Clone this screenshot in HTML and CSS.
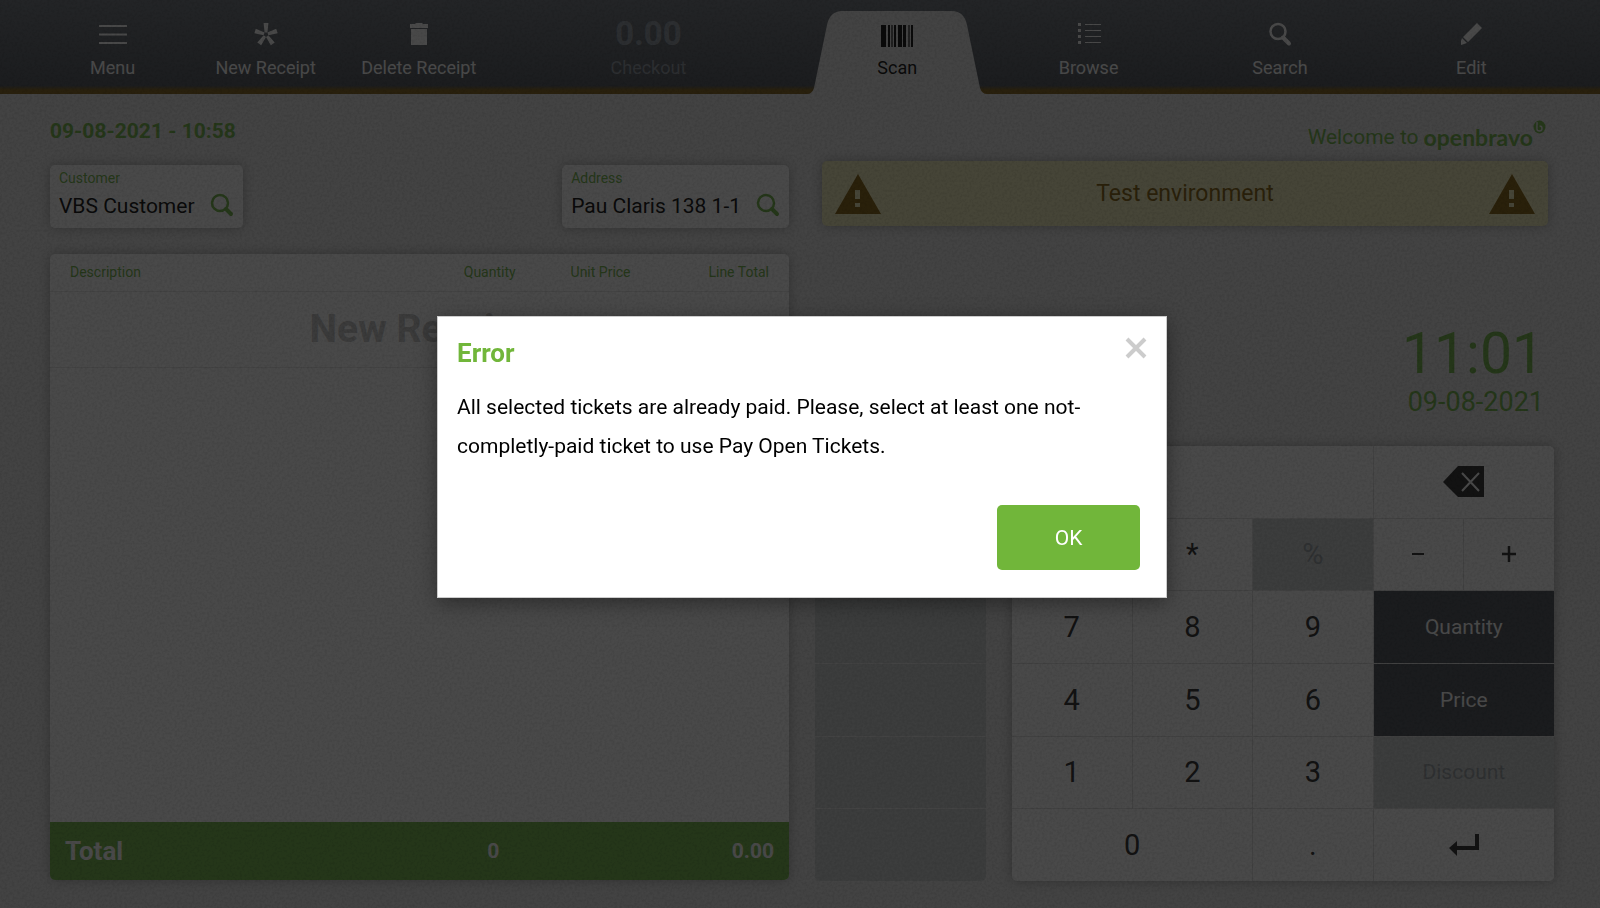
FILE: index.html
```html
<!DOCTYPE html>
<html lang="en">
<head>
	<meta charset="UTF-8">
	<meta name="viewport" content="width=device-width, initial-scale=1">
	<title>Web POS</title>
	<link rel="stylesheet" href="styles.css">
</head>
<body>
	<header class="toolbar">
		<button type="button" class="tool">
			<svg class="icon" width="30" height="24" viewBox="0 0 30 24"><path d="M1 4h28M1 12.500h28M1 21h28" fill="none" stroke="currentColor" stroke-width="2"/></svg>
			<span>Menu</span>
		</button>
		<button type="button" class="tool">
			<svg class="icon" width="24" height="24" viewBox="0 0 24 24">
				<g fill="currentColor">
					<path id="petal" d="M9.6 1h4.8l-1 9.500h-2.800z"/>
					<use href="#petal" transform="rotate(72 12 12.5)"/>
					<use href="#petal" transform="rotate(144 12 12.5)"/>
					<use href="#petal" transform="rotate(216 12 12.5)"/>
					<use href="#petal" transform="rotate(288 12 12.5)"/>
				</g>
			</svg>
			<span>New Receipt</span>
		</button>
		<button type="button" class="tool">
			<svg class="icon" width="24" height="24" viewBox="0 0 24 24"><path d="M3 2h5l1-1h6l1 1h5v4H3zM4 7h16v16H4z" fill="currentColor"/></svg>
			<span>Delete Receipt</span>
		</button>
		<button type="button" class="tool checkout" disabled>
			<strong>0.00</strong>
			<span>Checkout</span>
		</button>
		<button type="button" class="tool active">
			<svg class="tab" viewBox="0 0 180 83"><path d="M0 83q5 0 7-6L20 14Q23 0 35 0H145q12 0 15 14l13 63q2 6 7 6z" fill="currentColor"/></svg>
			<svg class="icon" width="34" height="24" viewBox="0 0 34 24">
				<path d="M1 3h5v22H1zM8 3h2v22H8zM14 3h2v22h-2zM18 3h4v22h-4zM23 3h3v22h-3zM31 3h2v22h-2z" fill="currentColor"/>
				<path d="M11 3h2v22h-2zM28 3h2v22h-2z" fill="currentColor" opacity=".6"/>
			</svg>
			<span>Scan</span>
		</button>
		<button type="button" class="tool">
			<svg class="icon" width="24" height="24" viewBox="0 0 24 24">
				<path d="M8 2.500h16M8 8.500h16M8 14.500h16M8 20.500h16" fill="none" stroke="currentColor"/>
				<path d="M1 1h3v3H1zM1 7h3v3H1zM1 13h3v3H1zM1 19h3v3H1z" fill="currentColor"/>
			</svg>
			<span>Browse</span>
		</button>
		<button type="button" class="tool">
			<svg class="icon" width="24" height="24" viewBox="0 0 24 24"><circle cx="10" cy="9.500" r="7.500" fill="none" stroke="currentColor" stroke-width="2.500"/><path d="M15 15.500l6 6" stroke="currentColor" stroke-width="4" stroke-linecap="round"/></svg>
			<span>Search</span>
		</button>
		<button type="button" class="tool">
			<svg class="icon" width="24" height="24" viewBox="0 0 24 24"><path d="M18 1l5 5L9 20l-5-5zM3 16l5 5-3 1-3 1v-4z" fill="currentColor"/></svg>
			<span>Edit</span>
		</button>
	</header>

	<main class="pos">
		<section class="left">
			<p class="order-date">09-08-2021 - 10:58</p>
			<div class="selectors">
				<button type="button" class="selector">
					<span class="selector-label">Customer</span>
					<span class="selector-value">VBS Customer</span>
					<svg width="24" height="24" viewBox="0 0 24 24"><circle cx="10" cy="10" r="8" fill="none" stroke="currentColor" stroke-width="2.500"/><path d="M16 16l5 5" stroke="currentColor" stroke-width="4" stroke-linecap="round"/></svg>
				</button>
				<button type="button" class="selector">
					<span class="selector-label">Address</span>
					<span class="selector-value">Pau Claris 138 1-1</span>
					<svg width="24" height="24" viewBox="0 0 24 24"><circle cx="10" cy="10" r="8" fill="none" stroke="currentColor" stroke-width="2.500"/><path d="M16 16l5 5" stroke="currentColor" stroke-width="4" stroke-linecap="round"/></svg>
				</button>
			</div>
			<div class="ticket">
				<table class="lines">
					<thead>
						<tr>
							<th class="col-desc">Description</th>
							<th class="col-qty">Quantity</th>
							<th class="col-price">Unit Price</th>
							<th class="col-total">Line Total</th>
						</tr>
					</thead>
					<tbody>
						<tr>
							<td colspan="4">New Receipt</td>
						</tr>
					</tbody>
				</table>
				<div class="total">
					<span class="total-label">Total</span>
					<span class="total-qty">0</span>
					<span class="total-amount">0.00</span>
				</div>
			</div>
		</section>

		<section class="right">
			<p class="welcome">
				Welcome to
				<span class="brand">openbravo</span>
				<svg class="brand-mark" width="13" height="14" viewBox="0 0 13 14"><ellipse cx="6.500" cy="7" rx="6" ry="6.500" fill="currentColor"/><path d="M4 2v7q0 2 2.500 2T9 8.500 6.500 6" fill="none" stroke="#e5e5e5" stroke-width="1.500"/></svg>
			</p>
			<div class="banner">
				<svg width="46" height="40" viewBox="0 0 46 40"><path d="M23 0l23 40H0zM20 16v9h5v-9zM20 29v4h5v-4z" fill="currentColor" fill-rule="evenodd"/></svg>
				<span>Test environment</span>
				<svg width="46" height="40" viewBox="0 0 46 40"><path d="M23 0l23 40H0zM20 16v9h5v-9zM20 29v4h5v-4z" fill="currentColor" fill-rule="evenodd"/></svg>
			</div>
			<div class="clock">
				<div class="time">11:01</div>
				<div class="date">09-08-2021</div>
			</div>
			<div class="pad">
				<div class="side-keys">
					<button type="button" disabled aria-label="Empty"></button>
					<button type="button" disabled aria-label="Empty"></button>
					<button type="button" disabled aria-label="Empty"></button>
					<button type="button" disabled aria-label="Empty"></button>
					<button type="button" disabled aria-label="Empty"></button>
					<button type="button" disabled aria-label="Empty"></button>
				</div>
				<div class="keys">
					<input type="text" class="display" aria-label="Amount">
					<button type="button" class="wide" aria-label="Backspace">
						<svg width="42" height="32" viewBox="0 0 42 32"><path d="M0 16L15 0h26v31H15z" fill="currentColor"/><path d="M19 7l17 18M36 7L19 25" stroke="#fff" stroke-width="2"/></svg>
					</button>
					<button type="button">/</button>
					<button type="button">*</button>
					<button type="button" disabled>%</button>
					<button type="button" aria-label="Minus"><svg width="16" height="16" viewBox="0 0 16 16"><path d="M2 8h12" stroke="currentColor" stroke-width="2"/></svg></button>
					<button type="button" aria-label="Plus"><svg width="16" height="16" viewBox="0 0 16 16"><path d="M1 8h14M8 0v16" stroke="currentColor" stroke-width="2.500"/></svg></button>
					<button type="button">7</button>
					<button type="button">8</button>
					<button type="button">9</button>
					<button type="button" class="wide dark">Quantity</button>
					<button type="button">4</button>
					<button type="button">5</button>
					<button type="button">6</button>
					<button type="button" class="wide dark">Price</button>
					<button type="button">1</button>
					<button type="button">2</button>
					<button type="button">3</button>
					<button type="button" class="wide" disabled>Discount</button>
					<button type="button" class="zero">0</button>
					<button type="button">.</button>
					<button type="button" class="wide" aria-label="Enter">
						<svg width="30" height="22" viewBox="0 0 30 22"><path d="M28 0v14H6" fill="none" stroke="currentColor" stroke-width="4"/><path d="M0 14l8-7v15z" fill="currentColor"/></svg>
					</button>
				</div>
			</div>
		</section>
	</main>

	<div class="scrim">
		<svg class="grain" width="100%" height="100%" aria-hidden="true">
			<filter id="grain" x="0" y="0" width="100%" height="100%" color-interpolation-filters="sRGB">
				<feTurbulence type="fractalNoise" baseFrequency=".4" numOctaves="2"/>
				<feColorMatrix values="0 0 0 0 0  0 0 0 0 0  0 0 0 0 0  .14 0 0 0 -.03"/>
			</filter>
			<rect width="100%" height="100%" filter="url(#grain)"/>
		</svg>
		<div class="dialog" role="dialog" aria-labelledby="dialog-title">
			<div class="dialog-head">
				<h1 id="dialog-title">Error</h1>
				<button type="button" class="close" aria-label="Close">
					<svg width="22" height="22" viewBox="0 0 22 22"><path d="M2 2l18 18M20 2L2 20" stroke="currentColor" stroke-width="4"/></svg>
				</button>
			</div>
			<p>All selected tickets are already paid. Please, select at least one not-completly-paid ticket to use Pay Open Tickets.</p>
			<div class="dialog-foot">
				<button type="button" class="ok">OK</button>
			</div>
		</div>
	</div>
</body>
</html>
```
FILE: styles.css
```css
*{
	margin: 0;
	padding: 0;
	box-sizing: border-box;
}
body{
	display: flex;
	flex-direction: column;
	min-height: 100vh;
	background: #e5e5e5;
	color: #000;
	font-family: Roboto, "Liberation Sans", sans-serif;
	font-size: 21px;
}
button,input{
	border: none;
	background: none;
	color: inherit;
	font: inherit;
}
button{
	cursor: pointer;
}
svg{
	display: block;
}

/* top bar */
.toolbar{
	display: grid;
	grid-template-columns: repeat(3, 4fr) 8fr repeat(4, 5fr);
	height: 94px;
	padding: 0 33px 0 36px;
	background: linear-gradient(transparent 91%, #7d5a0d 96%), linear-gradient(#666c74, #434850);
}
.tool{
	position: relative;
	display: flex;
	flex-direction: column;
	align-items: center;
	gap: 9px;
	padding-top: 22px;
	color: #fff;
	font-size: 18px;
	line-height: 26px;
}
.icon{
	overflow: visible;
}
.checkout{
	color: #8a929c;
}
.checkout strong{
	font-size: 33px;
	line-height: 24px;
}
.active{
	color: #000;
}
.active .icon,.active span{
	position: relative;
}
.tab{
	position: absolute;
	left: 50%;
	bottom: 0;
	width: 180px;
	height: 83px;
	margin-left: -90px;
	color: #e5e5e5;
}

/* two halves */
.pos{
	flex: 1;
	display: grid;
	grid-template-columns: 1fr 1fr;
	gap: 26px;
	padding: 0 46px 27px 50px;
}
.left,.right{
	display: flex;
	flex-direction: column;
}
.order-date{
	padding: 24px 0 21px;
	color: #6cb33f;
	font-weight: bold;
	line-height: 26px;
}
.selectors{
	display: flex;
	justify-content: space-between;
	margin-bottom: 26px;
}
.selector{
	display: grid;
	grid-template-columns: auto auto;
	column-gap: 15px;
	height: 63px;
	padding: 5px 9px;
	border-radius: 5px;
	background: #fff;
	box-shadow: 0 0 12px rgba(0,0,0,.3);
	text-align: left;
}
.selector-label{
	grid-column: 1 / 3;
	color: #6cb33f;
	font-size: 14px;
	line-height: 16px;
}
.selector-value{
	line-height: 40px;
}
.selector svg{
	margin-top: 7px;
	color: #6cb33f;
}
.ticket{
	flex: 1;
	display: flex;
	flex-direction: column;
	justify-content: space-between;
	margin-bottom: 1px;
	border-radius: 5px;
	background: #fff;
	box-shadow: 0 0 12px rgba(0,0,0,.3);
	overflow: hidden;
}
.lines{
	width: 100%;
	table-layout: fixed;
	border-collapse: collapse;
}
.lines th{
	height: 37px;
	border-bottom: 1px solid #e5e5e5;
	color: #6cb33f;
	font-size: 14px;
	font-weight: normal;
}
.lines td{
	height: 76px;
	border-bottom: 1px solid #e5e5e5;
	color: #c4c4c4;
	font-size: 39px;
	font-weight: bold;
	text-align: center;
}
.lines .col-desc{
	width: 54%;
	padding-left: 20px;
	text-align: left;
}
.lines .col-qty{
	width: 11%;
}
.lines .col-price{
	width: 19%;
}
.lines .col-total{
	width: 16%;
	padding-right: 20px;
	text-align: right;
}
.total{
	display: grid;
	grid-template-columns: 54% 12% 1fr;
	align-items: center;
	height: 58px;
	background: #6cb33f;
	color: #fff;
	font-weight: bold;
}
.total-label{
	padding-left: 15px;
	font-size: 26px;
}
.total-qty{
	text-align: center;
}
.total-amount{
	padding-right: 15px;
	text-align: right;
}

/* right half */
.welcome{
	display: flex;
	justify-content: flex-end;
	padding: 30px 8px 11px 0;
	color: #6cb33f;
	line-height: 26px;
}
.brand{
	margin-left: 5px;
	font-family: Lato, sans-serif;
	font-size: 23px;
	font-weight: bold;
}
.brand-mark{
	margin-top: -4px;
}
.banner{
	display: flex;
	justify-content: space-between;
	align-items: center;
	height: 65px;
	margin: 0 6px 0 7px;
	padding: 0 13px;
	border-radius: 5px;
	background: #f2edb7;
	box-shadow: 0 0 12px rgba(0,0,0,.3);
	color: #7f5a00;
	font-size: 23px;
}
.clock{
	flex: 1;
	display: flex;
	flex-direction: column;
	justify-content: flex-end;
	align-items: flex-end;
	padding: 0 10px 27px 0;
	color: #6cb33f;
}
.time{
	font-size: 57px;
	line-height: 62px;
}
.date{
	font-size: 27px;
	line-height: 34px;
}
.pad{
	display: grid;
	grid-template-columns: 171fr 542fr;
	gap: 26px;
	height: 435px;
	margin-top: auto;
}
.side-keys{
	display: grid;
	gap: 1px;
	border-radius: 5px;
	overflow: hidden;
}
.side-keys button{
	background: #cacece;
}
.keys{
	display: grid;
	grid-template-columns: repeat(3, 4fr) 3fr 3fr;
	grid-template-rows: repeat(6, 1fr);
	gap: 1px;
	border-radius: 5px;
	background: #dcdcdc;
	box-shadow: 0 0 12px rgba(0,0,0,.3);
	overflow: hidden;
}
.keys button{
	display: flex;
	justify-content: center;
	align-items: center;
	background: #fff;
	color: #222;
	font-size: 29px;
}
.keys .display{
	grid-column: span 3;
	width: 100%;
	padding: 0 20px;
	background: #fff;
	font-size: 29px;
}
.keys .wide{
	grid-column: span 2;
	font-size: 21px;
}
.keys .zero{
	grid-column: span 2;
}
.keys .dark{
	background: #434850;
	color: #fff;
}
.keys button:disabled{
	background: #cacece;
	color: #939ba0;
}

/* error dialog */
.scrim{
	position: fixed;
	inset: 0;
	display: flex;
	justify-content: center;
	align-items: center;
	padding: 6px 0 0 4px;
	background: rgba(13,13,13,.75);
}
.grain{
	position: absolute;
	inset: 0;
}
.dialog{
	position: relative;
	width: 730px;
	padding: 20px 19px;
	border: 1px solid #ccc;
	background: #fff;
	box-shadow: 0 5px 20px rgba(0,0,0,.4);
}
.dialog-head{
	display: flex;
	justify-content: space-between;
	margin-bottom: 19px;
}
.dialog h1{
	color: #71b63a;
	font-size: 26px;
	line-height: 32px;
}
.close{
	height: 22px;
	color: #ccc;
}
.dialog p{
	padding-right: 40px;
	line-height: 39px;
}
.dialog-foot{
	display: flex;
	justify-content: flex-end;
	padding: 39px 7px 7px 0;
}
.ok{
	width: 143px;
	height: 65px;
	border-radius: 5px;
	background: #71b63a;
	color: #fff;
}
```
